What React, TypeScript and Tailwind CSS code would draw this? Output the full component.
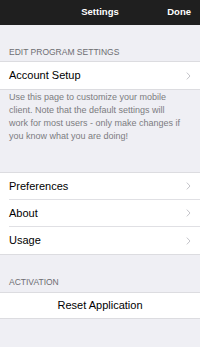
import React from "react";

const Chevron = () => (
  <svg width="5" height="8" viewBox="0 0 5 8" className="shrink-0">
    <path d="M0.8 0.6 L4 4 L0.8 7.4" fill="none" stroke="#c4c4c9" strokeWidth="1" />
  </svg>
);

const Row = ({ label, last }: { label: string; last?: boolean }) => (
  <div className="h-[27px] flex items-center pl-[9px]">
    <div
      className={
        "flex-1 h-full flex items-center justify-between pr-[9px] " +
        (last ? "" : "border-b border-[#e0e0e4]")
      }
    >
      <span className="text-[11px] text-black">{label}</span>
      <Chevron />
    </div>
  </div>
);

export default function App() {
  return (
    <div
      className="w-[200px] h-[347px] bg-[#efeff4] flex flex-col overflow-hidden"
      style={{ fontFamily: '"Liberation Sans", Arial, sans-serif' }}
    >
      <div className="h-[25px] bg-[#1f1f1f] flex items-center justify-center relative shrink-0">
        <span className="text-white text-[9.5px] font-bold">Settings</span>
        <span className="absolute right-[9px] text-white text-[9.5px] font-bold">Done</span>
      </div>

      <div className="h-[36px] flex items-end pb-[3px] pl-[9px] shrink-0">
        <span className="text-[8.5px] leading-[11px] text-[#6d6d72]">EDIT PROGRAM SETTINGS</span>
      </div>

      <div className="bg-white border-y border-[#dcdce0] shrink-0">
        <Row label="Account Setup" last />
      </div>

      <div className="h-[82px] pt-[1px] pl-[9px] text-[9px] leading-[13px] text-[#7c7c81] shrink-0">
        Use this page to customize your mobile
        <br />
        client. Note that the default settings will
        <br />
        work for most users - only make changes if
        <br />
        you know what you are doing!
      </div>

      <div className="bg-white border-y border-[#dcdce0] shrink-0">
        <Row label="Preferences" />
        <Row label="About" />
        <Row label="Usage" last />
      </div>

      <div className="h-[37px] flex items-end pb-[4px] pl-[9px] shrink-0">
        <span className="text-[8.5px] leading-[11px] text-[#6d6d72]">ACTIVATION</span>
      </div>

      <div className="bg-white border-y border-[#dcdce0] h-[27px] flex items-center justify-center shrink-0">
        <span className="text-[11px] text-black">Reset Application</span>
      </div>
    </div>
  );
}
